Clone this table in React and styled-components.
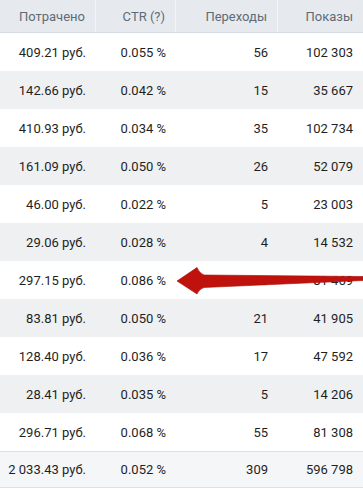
import React from 'react';
import styled, { createGlobalStyle } from 'styled-components';

const GlobalStyle = createGlobalStyle`
    html, body {
        margin: 0;
        padding: 0;
        background: #ffffff;
    }
    body {
        font-family: Roboto, "Liberation Sans", Arial, sans-serif;
        font-size: 13px;
    }
`;

const rows = [
    ['409.21 руб.', '0.055 %', '56', '102 303'],
    ['142.66 руб.', '0.042 %', '15', '35 667'],
    ['410.93 руб.', '0.034 %', '35', '102 734'],
    ['161.09 руб.', '0.050 %', '26', '52 079'],
    ['46.00 руб.', '0.022 %', '5', '23 003'],
    ['29.06 руб.', '0.028 %', '4', '14 532'],
    ['297.15 руб.', '0.086 %', '70', '81 469'],
    ['83.81 руб.', '0.050 %', '21', '41 905'],
    ['128.40 руб.', '0.036 %', '17', '47 592'],
    ['28.41 руб.', '0.035 %', '5', '14 206'],
    ['296.71 руб.', '0.068 %', '55', '81 308'],
];

const total = ['2 033.43 руб.', '0.052 %', '309', '596 798'];
const headers = ['Потрачено', 'CTR (?)', 'Переходы', 'Показы'];

export default function App() {
    return (
        <>
            <GlobalStyle />
            <Wrap>
                <HeadRow>
                    {headers.map((h, i) => (
                        <HeadCell key={h} $last={i === headers.length - 1}>{h}</HeadCell>
                    ))}
                </HeadRow>
                {rows.map((r, i) => (
                    <Row key={i} $striped={i % 2 === 1}>
                        {r.map((c, j) => (
                            <Cell key={j}>{c}</Cell>
                        ))}
                    </Row>
                ))}
                <TotalRow>
                    {total.map((c, j) => (
                        <Cell key={j}>{c}</Cell>
                    ))}
                </TotalRow>
                <Arrow viewBox="0 0 363 489" width="363" height="489">
                    <path
                        d="M177,281 L197,267.5 Q199,273 204,275 L363,276.5 L363,280.5 L204,287.5 Q199,289 197,294 Z"
                        fill="#c0120d"
                        stroke="#a80c08"
                        strokeWidth="0.6"
                        strokeLinejoin="round"
                    />
                </Arrow>
            </Wrap>
        </>
    );
}

const Wrap = styled.div`
    position: relative;
    width: 363px;
`;

const Grid = styled.div`
    display: grid;
    grid-template-columns: 96px 80px 102px 85px;
    align-items: center;
`;

const HeadRow = styled(Grid)`
    height: 32px;
    background: #e6eaee;
    border-bottom: 1px solid #d6dbe1;
    align-items: stretch;
`;

const HeadCell = styled.div`
    display: flex;
    align-items: center;
    justify-content: flex-end;
    padding-right: 10px;
    color: #5e6a76;
    border-right: ${({ $last }) => ($last ? 'none' : '1px solid #f2f4f6')};
`;

const Row = styled(Grid)`
    height: 38px;
    background: ${({ $striped }) => ($striped ? '#eef0f2' : '#ffffff')};
`;

const TotalRow = styled(Grid)`
    height: 35px;
    background: #f5f6f8;
    border-top: 1px solid #dcdfe3;
    border-bottom: 1px solid #dcdfe3;
`;

const Cell = styled.div`
    text-align: right;
    padding-right: 10px;
    color: #1f1f1f;
    white-space: nowrap;
`;

const Arrow = styled.svg`
    position: absolute;
    left: 0;
    top: 0;
    pointer-events: none;
`;
